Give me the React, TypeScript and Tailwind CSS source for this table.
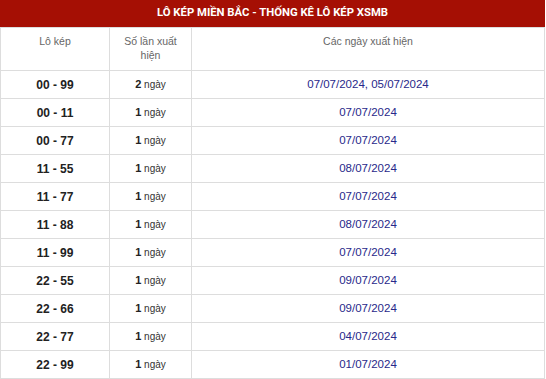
const rows = [
    { pair: "00 - 99", count: 2, dates: "07/07/2024, 05/07/2024" },
    { pair: "00 - 11", count: 1, dates: "07/07/2024" },
    { pair: "00 - 77", count: 1, dates: "07/07/2024" },
    { pair: "11 - 55", count: 1, dates: "08/07/2024" },
    { pair: "11 - 77", count: 1, dates: "07/07/2024" },
    { pair: "11 - 88", count: 1, dates: "08/07/2024" },
    { pair: "11 - 99", count: 1, dates: "07/07/2024" },
    { pair: "22 - 55", count: 1, dates: "09/07/2024" },
    { pair: "22 - 66", count: 1, dates: "09/07/2024" },
    { pair: "22 - 77", count: 1, dates: "04/07/2024" },
    { pair: "22 - 99", count: 1, dates: "01/07/2024" },
]

export default function App() {
    return (
        <div className="w-[546px] bg-white font-['Liberation_Sans',Arial,sans-serif]">
            <div className="flex h-[27px] w-[545px] items-center justify-center bg-[#a50f04] font-['Roboto',sans-serif] text-[11.3px] font-bold uppercase text-white">
                Lô kép miền Bắc - Thống kê lô kép XSMB
            </div>
            <table className="w-[545px] table-fixed border-collapse">
                <colgroup>
                    <col className="w-[109px]" />
                    <col className="w-[82px]" />
                    <col />
                </colgroup>
                <thead>
                    <tr className="h-[43px] align-top text-[10.5px] text-[#666]">
                        <th className="border border-[#ddd] pt-[6px] font-normal leading-[14px]">Lô kép</th>
                        <th className="border border-[#ddd] px-3 pt-[6px] font-normal leading-[14px]">Số lần xuất hiện</th>
                        <th className="border border-[#ddd] pt-[6px] font-normal leading-[14px]">Các ngày xuất hiện</th>
                    </tr>
                </thead>
                <tbody>
                    {rows.map((row) => (
                        <tr key={row.pair} className="h-[28px]">
                            <td className="border border-[#ddd] text-center text-[12px] font-bold text-[#222]">{row.pair}</td>
                            <td className="border border-[#ddd] text-center text-[10px] text-[#333]">
                                <b className="text-[11px] text-[#222]">{row.count}</b> ngày
                            </td>
                            <td className="border border-[#ddd] text-center text-[11.5px] text-[#28288a]">{row.dates}</td>
                        </tr>
                    ))}
                </tbody>
            </table>
        </div>
    )
}
